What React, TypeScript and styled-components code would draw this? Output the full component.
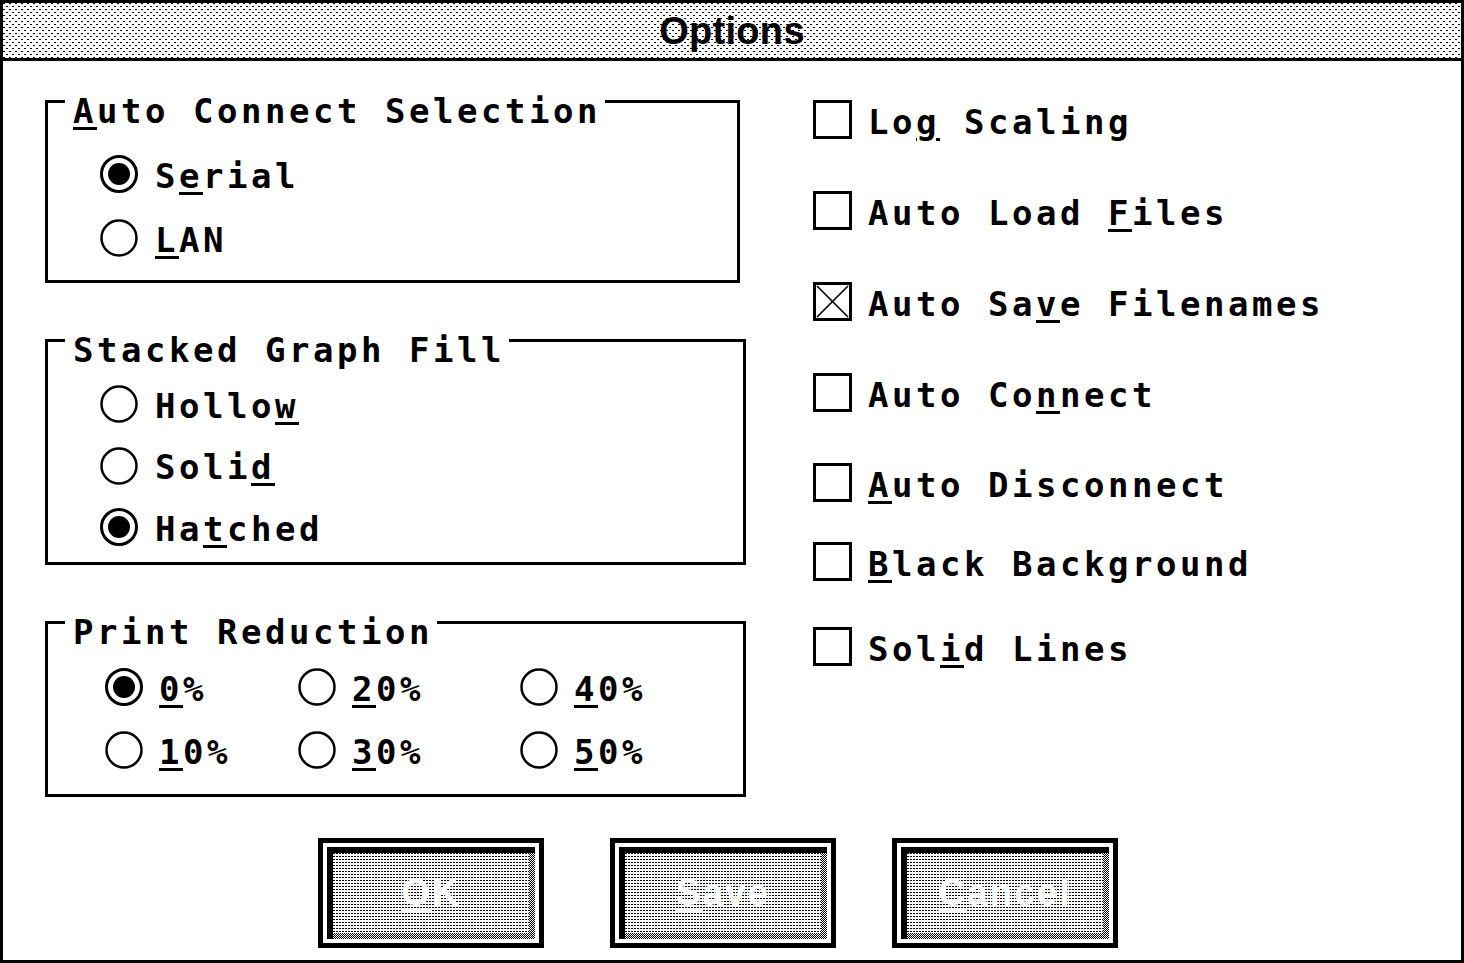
import styled, { createGlobalStyle } from "styled-components";

const GlobalStyle = createGlobalStyle`
  html, body {
    margin: 0;
    padding: 0;
    background: #fff;
  }
  body {
    font-family: "DejaVu Sans Mono", "Liberation Mono", monospace;
    color: #000;
  }
`;

const Window = styled.div`
  width: 1464px;
  height: 963px;
  box-sizing: border-box;
  border: 3px solid #000;
  display: flex;
  flex-direction: column;
  background: #fff;
  overflow: hidden;
`;

const TitleBar = styled.header`
  height: 54px;
  flex: none;
  border-bottom: 3px solid #000;
  display: flex;
  align-items: center;
  justify-content: center;
  background-color: #fff;
  background-image: conic-gradient(from 270deg at 2px 1px, #000 25%, transparent 0),
    conic-gradient(from 270deg at 2px 1px, #000 25%, transparent 0);
  background-size: 6px 6px;
  background-position: 0 0, 3px 3px;
  font-family: "Liberation Sans", Arial, sans-serif;
  font-weight: bold;
  font-size: 38px;
  letter-spacing: 0.3px;
  line-height: 54px;
  padding-top: 1px;
`;

const Body = styled.main`
  flex: 1;
  display: flex;
  flex-direction: column;
  padding: 39px 0 12px 42px;
`;

const Columns = styled.div`
  display: flex;
  align-items: flex-start;
`;

const LeftColumn = styled.div`
  width: 701px;
  display: flex;
  flex-direction: column;
  gap: 56px;
`;

const RightColumn = styled.div`
  margin-left: 67px;
  display: flex;
  flex-direction: column;
`;

const GroupBox = styled.fieldset<{ $width: number }>`
  margin: 0;
  padding: 0;
  width: ${(p) => p.$width}px;
  box-sizing: border-box;
  border: 3px solid #000;
  display: flex;
  flex-direction: column;
`;

const Legend = styled.div`
  align-self: flex-start;
  margin: -9px 0 0 17px;
  padding: 0 4px 0 8px;
  background: #fff;
  height: 34px;
  line-height: 34px;
  font-size: 34px;
  font-weight: bold;
  letter-spacing: 3.53px;
  white-space: pre;
`;

const OptionList = styled.div<{ $top: number; $gap: number; $bottom: number; $left: number }>`
  display: flex;
  flex-direction: column;
  gap: ${(p) => p.$gap}px;
  padding: ${(p) => `${p.$top}px 0 ${p.$bottom}px ${p.$left}px`};
`;

const OptionGrid = styled.div`
  display: grid;
  grid-template-columns: 193px 222px auto;
  row-gap: 25px;
  padding: 19px 0 25px 57px;
`;

const Row = styled.label<{ $gap?: number }>`
  display: flex;
  align-items: center;
  gap: ${(p) => p.$gap ?? 17}px;
  height: 38px;
`;

const CheckRow = styled.label<{ $mt: number }>`
  display: flex;
  align-items: center;
  gap: 16px;
  height: 39px;
  margin-top: ${(p) => p.$mt}px;
`;

const Label = styled.span<{ $shift: number }>`
  font-size: 34px;
  font-weight: bold;
  letter-spacing: 3.53px;
  line-height: 34px;
  padding-top: ${(p) => p.$shift}px;
  white-space: pre;
`;

const Under = styled.span`
  text-decoration: underline;
  text-decoration-thickness: 3px;
  text-underline-offset: 4px;
`;

const ButtonRow = styled.div`
  margin-top: auto;
  display: flex;
  padding-left: 273px;
`;

const Button = styled.button<{ $ml: number }>`
  width: 226px;
  height: 110px;
  box-sizing: border-box;
  border: 5px solid #000;
  padding: 4px;
  margin: 0 0 0 ${(p) => p.$ml}px;
  background: #fff;
  display: flex;
  cursor: default;
`;

const ButtonFace = styled.span`
  flex: 1;
  display: flex;
  border-top: 6px solid #000;
  border-left: 6px solid #000;
  padding: 0 6px 6px 0;
  background: repeating-conic-gradient(#000 0 25%, #fff 0 50%) 0 0 / 2px 2px;
`;

const ButtonFill = styled.span`
  flex: 1;
  display: flex;
  align-items: center;
  justify-content: center;
  background-color: #fff;
  background-image: conic-gradient(from 270deg at 2px 1px, #000 25%, transparent 0);
  background-size: 3px 3px;
  color: #fff;
  font-family: "Liberation Sans", Arial, sans-serif;
  font-weight: bold;
  font-size: 37px;
  letter-spacing: 2px;
  span {
    text-decoration-thickness: 2px;
  }
`;

const Accel = ({ text, at }: { text: string; at: number }) => (
  <>
    {text.slice(0, at)}
    <Under>{text[at]}</Under>
    {text.slice(at + 1)}
  </>
);

const RadioMark = ({ checked }: { checked?: boolean }) => (
  <svg width="38" height="38" viewBox="0 0 38 38" style={{ flex: "none" }}>
    <circle cx="19" cy="19" r="17.5" fill="#fff" stroke="#000" strokeWidth={checked ? 3 : 2.5} />
    {checked && <circle cx="19" cy="19" r="11" fill="#000" />}
  </svg>
);

const CheckMark = ({ checked }: { checked?: boolean }) => (
  <svg width="39" height="39" viewBox="0 0 39 39" style={{ flex: "none" }}>
    <rect x="1.5" y="1.5" width="36" height="36" fill="#fff" stroke="#000" strokeWidth="3" />
    {checked && <path d="M4 4 L35 35 M35 4 L4 35" stroke="#000" strokeWidth="1.7" fill="none" />}
  </svg>
);

const Radio = ({ text, at, checked, gap }: { text: string; at: number; checked?: boolean; gap?: number }) => (
  <Row $gap={gap}>
    <RadioMark checked={checked} />
    <Label $shift={3}>
      <Accel text={text} at={at} />
    </Label>
  </Row>
);

const checks = [
  { text: "Log Scaling", at: 2, mt: 0 },
  { text: "Auto Load Files", at: 10, mt: 52 },
  { text: "Auto Save Filenames", at: 7, mt: 52, checked: true },
  { text: "Auto Connect", at: 7, mt: 52 },
  { text: "Auto Disconnect", at: 0, mt: 51 },
  { text: "Black Background", at: 0, mt: 40 },
  { text: "Solid Lines", at: 3, mt: 46 },
];

const percents = [
  { text: "0%", checked: true },
  { text: "20%" },
  { text: "40%" },
  { text: "10%" },
  { text: "30%" },
  { text: "50%" },
];

const buttons = [
  { text: "OK", ml: 0 },
  { text: "Save", ml: 66 },
  { text: "Cancel", ml: 56 },
];

export default function App() {
  return (
    <>
      <GlobalStyle />
      <Window>
        <TitleBar>Options</TitleBar>
        <Body>
          <Columns>
            <LeftColumn>
              <GroupBox $width={695}>
                <Legend>
                  <Accel text="Auto Connect Selection" at={0} />
                </Legend>
                <OptionList $top={27} $gap={26} $bottom={23} $left={52}>
                  <Radio text="Serial" at={1} checked />
                  <Radio text="LAN" at={0} />
                </OptionList>
              </GroupBox>

              <GroupBox $width={701}>
                <Legend>Stacked Graph Fill</Legend>
                <OptionList $top={18} $gap={23.5} $bottom={16} $left={52}>
                  <Radio text="Hollow" at={5} />
                  <Radio text="Solid" at={4} />
                  <Radio text="Hatched" at={2} checked />
                </OptionList>
              </GroupBox>

              <GroupBox $width={701}>
                <Legend>Print Reduction</Legend>
                <OptionGrid>
                  {percents.map((p) => (
                    <Radio key={p.text} text={p.text} at={0} checked={p.checked} gap={16} />
                  ))}
                </OptionGrid>
              </GroupBox>
            </LeftColumn>

            <RightColumn>
              {checks.map((c) => (
                <CheckRow key={c.text} $mt={c.mt}>
                  <CheckMark checked={c.checked} />
                  <Label $shift={4}>
                    <Accel text={c.text} at={c.at} />
                  </Label>
                </CheckRow>
              ))}
            </RightColumn>
          </Columns>

          <ButtonRow>
            {buttons.map((b) => (
              <Button key={b.text} $ml={b.ml}>
                <ButtonFace>
                  <ButtonFill>
                    <Accel text={b.text} at={0} />
                  </ButtonFill>
                </ButtonFace>
              </Button>
            ))}
          </ButtonRow>
        </Body>
      </Window>
    </>
  );
}
